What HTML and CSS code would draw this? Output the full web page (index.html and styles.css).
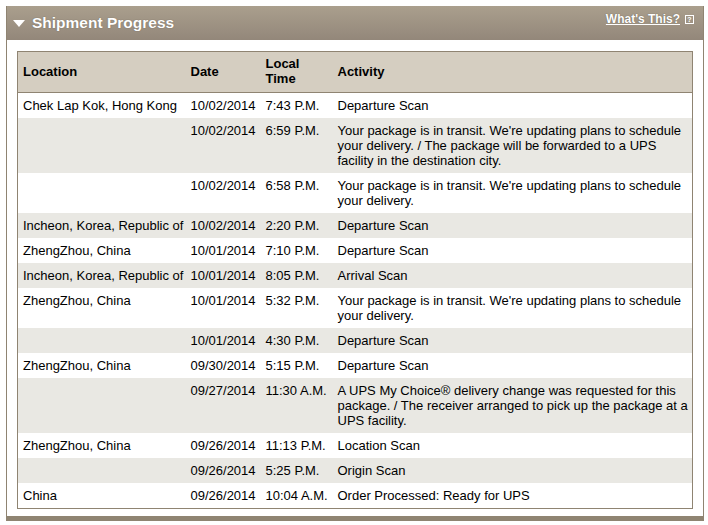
FILE: index.html
```html
<!DOCTYPE html>
<html lang="en">
<head>
<meta charset="utf-8">
<title>Shipment Progress</title>
<link rel="stylesheet" href="styles.css">
</head>
<body>
<div class="panel">
  <div class="panel-head">
    <h2 class="title"><span class="tri"></span>Shipment Progress</h2>
    <div class="help"><a href="#" class="help-link">What's This?</a><span class="help-icon">?</span></div>
  </div>
  <div class="panel-body">
    <table class="progress">
      <colgroup>
        <col class="c-loc"><col class="c-date"><col class="c-time"><col class="c-act">
      </colgroup>
      <thead>
        <tr><th>Location</th><th>Date</th><th>Local<br>Time</th><th>Activity</th></tr>
      </thead>
      <tbody>
        <tr><td>Chek Lap Kok, Hong Kong</td><td>10/02/2014</td><td>7:43 P.M.</td><td>Departure Scan</td></tr>
        <tr class="alt"><td></td><td>10/02/2014</td><td>6:59 P.M.</td><td>Your package is in transit. We're updating plans to schedule your delivery. / The package will be forwarded to a UPS facility in the destination city.</td></tr>
        <tr><td></td><td>10/02/2014</td><td>6:58 P.M.</td><td>Your package is in transit. We're updating plans to schedule your delivery.</td></tr>
        <tr class="alt"><td>Incheon, Korea, Republic of</td><td>10/02/2014</td><td>2:20 P.M.</td><td>Departure Scan</td></tr>
        <tr><td>ZhengZhou, China</td><td>10/01/2014</td><td>7:10 P.M.</td><td>Departure Scan</td></tr>
        <tr class="alt"><td>Incheon, Korea, Republic of</td><td>10/01/2014</td><td>8:05 P.M.</td><td>Arrival Scan</td></tr>
        <tr><td>ZhengZhou, China</td><td>10/01/2014</td><td>5:32 P.M.</td><td>Your package is in transit. We're updating plans to schedule your delivery.</td></tr>
        <tr class="alt"><td></td><td>10/01/2014</td><td>4:30 P.M.</td><td>Departure Scan</td></tr>
        <tr><td>ZhengZhou, China</td><td>09/30/2014</td><td>5:15 P.M.</td><td>Departure Scan</td></tr>
        <tr class="alt"><td></td><td>09/27/2014</td><td>11:30 A.M.</td><td>A UPS My Choice® delivery change was requested for this package. / The receiver arranged to pick up the package at a UPS facility.</td></tr>
        <tr><td>ZhengZhou, China</td><td>09/26/2014</td><td>11:13 P.M.</td><td>Location Scan</td></tr>
        <tr class="alt"><td></td><td>09/26/2014</td><td>5:25 P.M.</td><td>Origin Scan</td></tr>
        <tr><td>China</td><td>09/26/2014</td><td>10:04 A.M.</td><td>Order Processed: Ready for UPS</td></tr>
      </tbody>
    </table>
  </div>
</div>
</body>
</html>
```
FILE: styles.css
```css
html, body {
  margin: 0;
  padding: 0;
  background: #fff;
}
body {
  font-family: "Liberation Sans", Arial, Helvetica, sans-serif;
  font-size: 13px;
  line-height: 15px;
  color: #000;
}
.panel {
  width: 696px;
  margin: 6px 0 0 6px;
  border-left: 1px solid #8f8472;
  border-right: 1px solid #8f8472;
  border-bottom: 5px solid #8f8472;
}
.panel-head {
  height: 34px;
  background: linear-gradient(#aa9f8d, #93877a);
  display: flex;
  justify-content: space-between;
  align-items: flex-start;
}
.title {
  margin: 0;
  padding: 8px 0 0 6px;
  font-size: 15.5px;
  line-height: 18px;
  font-weight: bold;
  color: #fff;
  text-shadow: 0 0 1px rgba(60, 50, 40, 0.6);
  display: flex;
  align-items: center;
}
.tri {
  width: 0;
  height: 0;
  border-left: 6px solid transparent;
  border-right: 6px solid transparent;
  border-top: 7px solid #fff;
  margin: 0 7px 0 0;
}
.help {
  display: flex;
  align-items: center;
  padding: 6px 9px 0 0;
}
.help-link {
  color: #fff;
  font-size: 12px;
  font-weight: bold;
  line-height: 15px;
  text-decoration: underline;
  text-shadow: 0 0 1px rgba(60, 50, 40, 0.7);
}
.help-icon {
  box-sizing: border-box;
  width: 9px;
  height: 9px;
  border: 1px solid #fff;
  margin-left: 5px;
  margin-top: -1px;
  color: #fff;
  font-size: 7px;
  line-height: 7px;
  font-weight: bold;
  text-align: center;
}
.panel-body {
  padding: 11px 10px 7px 10px;
}
.progress {
  width: 676px;
  border-collapse: collapse;
  table-layout: fixed;
  border: 1px solid #8f8472;
}
.c-loc { width: 168px; }
.c-date { width: 75px; }
.c-time { width: 72px; }
.c-act { width: auto; }
.progress th {
  background: #d5cec1;
  text-align: left;
  font-weight: bold;
  vertical-align: middle;
  padding: 4px 2px 6px 5px;
  border-bottom: 1px solid #8f8472;
}
.progress td {
  vertical-align: top;
  padding: 5px 2px 5px 5px;
  white-space: normal;
}
.progress td:first-child { white-space: nowrap; }
.progress tr.alt td {
  background: #e9e8e3;
}
```
